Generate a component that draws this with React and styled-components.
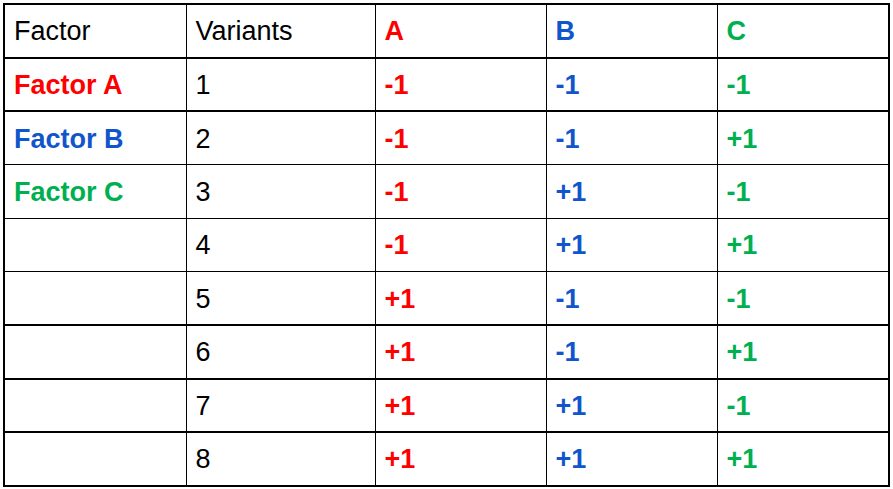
import React from "react";
import styled, { createGlobalStyle } from "styled-components";

const GlobalStyle = createGlobalStyle`
  body {
    margin: 0;
    background: #ffffff;
    font-family: "Liberation Sans", Arial, sans-serif;
  }
`;

const COLORS = {
  A: "#ff0000",
  B: "#1155cc",
  C: "#00b050",
};

const Page = styled.div`
  padding: 3px 0 0 3px;
`;

const Table = styled.table`
  border-collapse: collapse;
  table-layout: fixed;
  width: 885px;
  border: 2px solid #000;
  font-size: 27px;
  color: #000;
`;

const Row = styled.tr`
  height: 53.5px;
  border-bottom: ${(props) => props.line || "1px"} solid #000;
`;

const Cell = styled.td`
  border-left: 1px solid #000;
  border-right: 1px solid #000;
  padding: 2px 0 0 9px;
  vertical-align: middle;
  white-space: nowrap;
  color: ${(props) => props.color || "#000"};
  font-weight: ${(props) => (props.bold ? 700 : 400)};
`;

const widths = [182, 189, 171, 171, 172];

const rows = [
  { factor: "A", n: 1, a: "-1", b: "-1", c: "-1", line: "2px" },
  { factor: "B", n: 2, a: "-1", b: "-1", c: "+1" },
  { factor: "C", n: 3, a: "-1", b: "+1", c: "-1" },
  { n: 4, a: "-1", b: "+1", c: "+1" },
  { n: 5, a: "+1", b: "-1", c: "-1", line: "2px" },
  { n: 6, a: "+1", b: "-1", c: "+1", line: "2px" },
  { n: 7, a: "+1", b: "+1", c: "-1", line: "2px" },
  { n: 8, a: "+1", b: "+1", c: "+1" },
];

const App = () => {
  return (
    <Page>
      <GlobalStyle />
      <Table>
        <colgroup>
          {widths.map((w, i) => (
            <col key={i} style={{ width: w }} />
          ))}
        </colgroup>
        <tbody>
          <Row line="2px">
            <Cell>Factor</Cell>
            <Cell>Variants</Cell>
            <Cell bold color={COLORS.A}>A</Cell>
            <Cell bold color={COLORS.B}>B</Cell>
            <Cell bold color={COLORS.C}>C</Cell>
          </Row>
          {rows.map((r) => (
            <Row key={r.n} line={r.line}>
              <Cell bold color={r.factor && COLORS[r.factor]}>
                {r.factor ? `Factor ${r.factor}` : ""}
              </Cell>
              <Cell>{r.n}</Cell>
              <Cell bold color={COLORS.A}>{r.a}</Cell>
              <Cell bold color={COLORS.B}>{r.b}</Cell>
              <Cell bold color={COLORS.C}>{r.c}</Cell>
            </Row>
          ))}
        </tbody>
      </Table>
    </Page>
  );
};

export default App;
